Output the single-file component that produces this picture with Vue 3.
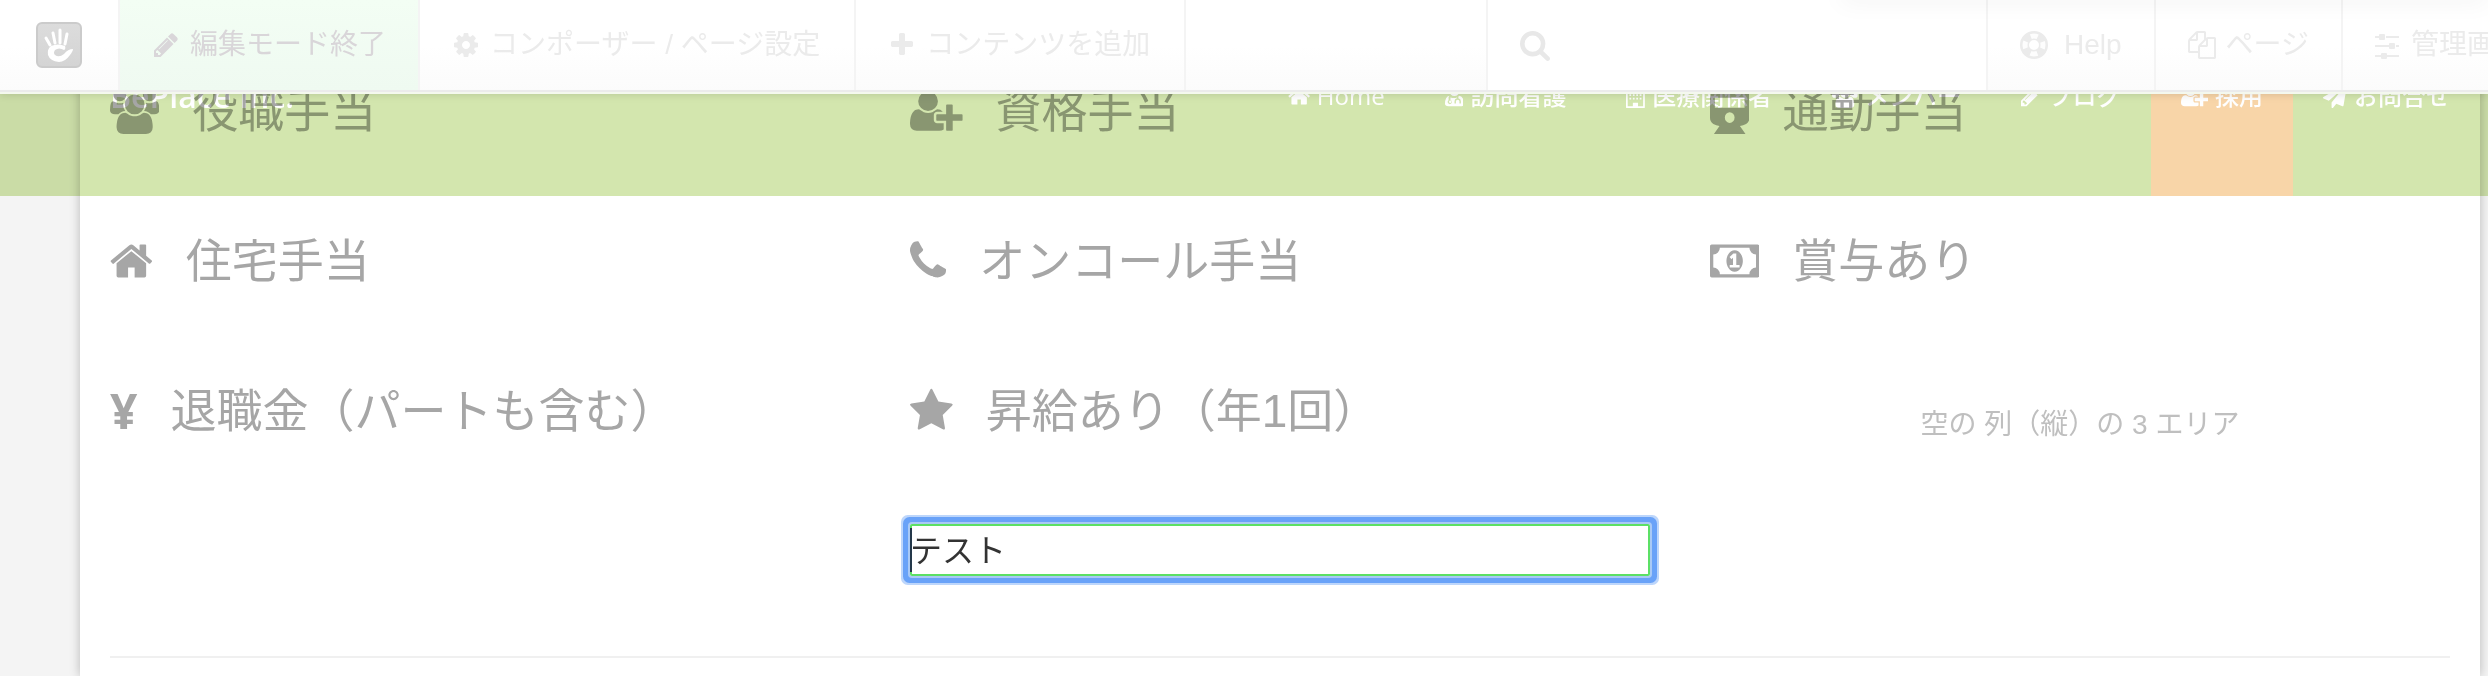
<template>
    <div class="page">
        <!-- 編集ツールバー -->
        <header class="toolbar">
            <a href="#" class="toolbar-logo" aria-label="concrete5">
                <svg viewBox="0 0 46 46">
                    <defs>
                        <linearGradient id="logo-bg" x1="0" y1="0" x2="0" y2="1">
                            <stop offset="0" stop-color="#dcdcdc" />
                            <stop offset="1" stop-color="#d4d4d4" />
                        </linearGradient>
                    </defs>
                    <rect x="1" y="1" width="44" height="44" rx="5" fill="url(#logo-bg)" stroke="#cbcbcb"
                        stroke-width="2" />
                    <g stroke="#fff" stroke-width="3" stroke-linecap="round">
                        <path d="M10 16l4 7M17 11l2 10M24 8v13M31 12l-2 10" />
                    </g>
                    <path fill="#fff"
                        d="M15 24Q22 21 29 24Q30 27 28 28Q23 25 19 28Q17 31 19 33Q23 36 28 32Q32 27 37 27Q37 29 34 33Q29 40 23 40Q14 39 12 33Q11 27 15 24z" />
                </svg>
            </a>
            <button v-for="item in editItems" :key="item.label" type="button" class="toolbar-item"
                :class="{ 'is-active': item.active }">
                <svg class="toolbar-icon" :viewBox="icons[item.icon].box">
                    <path :d="icons[item.icon].d" />
                </svg>
                <span>{{ item.label }}</span>
            </button>
            <label class="toolbar-search">
                <svg class="search-icon" :viewBox="icons.search.box">
                    <path :d="icons.search.d" />
                </svg>
                <input type="search" aria-label="検索">
            </label>
            <button type="button" class="toolbar-item is-help">
                <svg class="toolbar-icon is-wide" viewBox="0 0 28 28">
                    <circle cx="14" cy="14" r="9" fill="none" stroke="currentColor" stroke-width="8" />
                    <circle cx="14" cy="14" r="9" fill="none" stroke="#fdfdfd" stroke-width="5"
                        stroke-dasharray="7 7.14" stroke-dashoffset="3.5" />
                    <circle cx="14" cy="14" r="13" fill="none" stroke="currentColor" stroke-width="2" />
                </svg>
                <span>Help</span>
            </button>
            <button type="button" class="toolbar-item is-pages">
                <svg class="toolbar-icon is-wide" :viewBox="icons.files.box">
                    <path :d="icons.files.d" />
                </svg>
                <span>ページ</span>
            </button>
            <button type="button" class="toolbar-item is-dashboard">
                <svg class="toolbar-icon" viewBox="0 0 24 28">
                    <path
                        d="M0 5h4v2H0zM11 5h13v2H11zM0 14h14v2H0zM21 14h3v2h-3zM0 24h6v2H0zM12 24h12v2H12z" />
                    <rect x="4" y="3" width="6" height="6" rx="1" />
                    <rect x="14" y="12" width="6" height="6" rx="1" />
                    <rect x="6" y="22" width="6" height="6" rx="1" />
                </svg>
                <span>管理画面</span>
            </button>
        </header>

        <!-- サイトナビゲーション -->
        <nav class="site-nav">
            <a href="#" class="brand">BePlace Inc.</a>
            <a v-for="link in navLinks" :key="link.label" href="#" class="nav-link"
                :class="{ 'is-recruit': link.recruit }">
                <svg class="nav-icon" :viewBox="icons[link.icon].box">
                    <path :d="icons[link.icon].d" fill-rule="evenodd" />
                </svg>
                <span>{{ link.label }}</span>
            </a>
        </nav>

        <!-- 待遇一覧 -->
        <main class="sheet">
            <div class="features">
                <h4 v-for="item in features" :key="item.label" class="feature">
                    <svg v-if="item.icon" class="feature-icon" :viewBox="icons[item.icon].box">
                        <path :d="icons[item.icon].d" fill-rule="evenodd" />
                    </svg>
                    <span v-else class="feature-yen">¥</span>
                    <span>{{ item.label }}</span>
                </h4>
                <p class="empty-area">空の 列（縦）の 3 エリア</p>
            </div>
            <div class="editor-row">
                <div class="editor">
                    <input v-model="text" type="text" class="editor-input" aria-label="テキスト">
                    <span class="caret"></span>
                </div>
            </div>
            <hr class="divider">
        </main>
    </div>
</template>

<script setup>
import { ref } from 'vue'

const text = ref('テスト')

const editItems = [
    { label: '編集モード終了', icon: 'pencil', active: true },
    { label: 'コンポーザー / ページ設定', icon: 'cog' },
    { label: 'コンテンツを追加', icon: 'plus' }
]

const navLinks = [
    { label: 'Home', icon: 'home' },
    { label: '訪問看護', icon: 'userMd' },
    { label: '医療関係者', icon: 'building' },
    { label: 'メンバー', icon: 'users' },
    { label: 'ブログ', icon: 'pencil' },
    { label: '採用', icon: 'userPlus', recruit: true },
    { label: 'お問合せ', icon: 'plane' }
]

const features = [
    { label: '役職手当', icon: 'users' },
    { label: '資格手当', icon: 'userPlus' },
    { label: '通勤手当', icon: 'train' },
    { label: '住宅手当', icon: 'home' },
    { label: 'オンコール手当', icon: 'phone' },
    { label: '賞与あり', icon: 'money' },
    { label: '退職金（パートも含む）' },
    { label: '昇給あり（年1回）', icon: 'star' }
]

// アイコンのパス
const icons = {
    home: {
        box: '64 0 1664 1792',
        d: 'M1472 992v480q0 26-19 45t-45 19h-384v-384h-256v384h-384q-26 0-45-19t-19-45v-480q0-1 .5-3t.5-3l575-474 575 474q1 2 1 6zm223-69l-62 74q-8 9-21 11h-3q-13 0-21-7l-692-577-692 577q-12 8-24 7-13-2-21-11l-62-74q-8-10-7-23.5t11-21.5l719-599q32-26 76-26t76 26l244 204v-195q0-14 9-23t23-9h192q14 0 23 9t9 23v408l219 182q10 8 11 21.5t-7 23.5z'
    },
    phone: {
        box: '192 0 1408 1792',
        d: 'M1600 1240q0 27-10 70.5t-21 68.5q-21 50-122 106-94 51-186 51-27 0-53-3.5t-57.5-12.5-47-14.5-55.5-20.5-49-18q-98-35-175-83-127-79-264-216t-216-264q-48-77-83-175-3-9-18-49t-20.5-55.5-14.5-47-12.5-57.5-3.5-53q0-92 51-186 56-101 106-122 25-11 68.5-21t70.5-10q14 0 21 3 18 6 53 76 11 19 30 54t35 63.5 31 53.5q3 4 17.5 25t21.5 35.5 7 28.5q0 20-28.5 50t-62 55-62 53-28.5 46q0 9 5 22.5t8.5 20.5 14 24 11.5 19q76 137 174 235t235 174q2 1 19 11.5t24 14 20.5 8.5 22.5 5q18 0 46-28.5t53-62 55-62 50-28.5q14 0 28.5 7t35.5 21.5 25 17.5q25 15 53.5 31t63.5 35 54 30q70 35 76 53 3 7 3 21z'
    },
    star: {
        box: '64 0 1664 1792',
        d: 'M1728 647q0 22-26 48l-363 354 86 500q1 7 1 20 0 21-10.5 35.5t-30.5 14.5q-19 0-40-12l-449-236-449 236q-22 12-40 12-21 0-31.5-14.5t-10.5-35.5q0-6 2-20l86-500-364-354q-25-27-25-48 0-37 56-46l502-73 225-455q19-41 49-41t49 41l225 455 502 73q56 9 56 46z'
    },
    search: {
        box: '64 128 1664 1664',
        d: 'M1216 832q0-185-131.5-316.5t-316.5-131.5-316.5 131.5-131.5 316.5 131.5 316.5 316.5 131.5 316.5-131.5 131.5-316.5zm512 832q0 52-38 90t-90 38q-54 0-90-38l-343-342q-179 124-399 124-143 0-273.5-55.5t-225-150-150-225-55.5-273.5 55.5-273.5 150-225 225-150 273.5-55.5 273.5 55.5 225 150 150 225 55.5 273.5q0 220-124 399l343 343q37 37 37 90z'
    },
    plus: {
        box: '128 0 1536 1792',
        d: 'M1600 736v192q0 40-28 68t-68 28h-416v416q0 40-28 68t-68 28h-192q-40 0-68-28t-28-68v-416h-416q-40 0-68-28t-28-68v-192q0-40 28-68t68-28h416v-416q0-40 28-68t68-28h192q40 0 68 28t28 68v416h416q40 0 68 28t28 68z'
    },
    pencil: {
        box: '128 0 1536 1792',
        d: 'M491 1536l91-91-235-235-91 91v107h128v128h107zm523-928q0-22-22-22-10 0-17 7l-542 542q-7 7-7 17 0 22 22 22 10 0 17-7l542-542q7-7 7-17zm-54-192l416 416-832 832h-416v-416zm683 96q0 53-37 90l-166 166-416-416 166-165q36-38 90-38 53 0 91 38l235 234q37 39 37 91z'
    },
    cog: {
        box: '128 0 1536 1792',
        d: 'M1152 896q0-106-75-181t-181-75-181 75-75 181 75 181 181 75 181-75 75-181zm512-109v222q0 12-8 23t-20 13l-185 28q-19 54-39 91 35 50 107 138 10 12 10 25t-9 23q-27 37-99 108t-94 71q-12 0-26-9l-138-108q-44 23-91 38-16 136-29 186-7 28-36 28h-222q-14 0-24.5-8.5t-11.5-21.5l-28-184q-49-16-90-37l-141 107q-10 9-25 9-14 0-25-11-126-114-165-168-7-10-7-23 0-12 8-23 15-21 51-66.5t54-70.5q-27-50-41-99l-183-27q-13-2-21-12.5t-8-23.5v-222q0-12 8-23t19-13l186-28q14-46 39-92-40-57-107-138-10-12-10-24 0-10 9-23 26-36 98.5-107.5t94.5-71.5q13 0 26 10l138 107q44-23 91-38 16-136 29-186 7-28 36-28h222q14 0 24.5 8.5t11.5 21.5l28 184q49 16 90 37l142-107q9-9 24-9 13 0 25 10 129 119 165 170 7 8 7 22 0 12-8 23-15 21-51 66.5t-54 70.5q26 50 41 98l183 28q13 2 21 12.5t8 23.5z'
    },
    files: {
        box: '0 0 1792 1792',
        d: 'M1696 384q40 0 68 28t28 68v1216q0 40-28 68t-68 28h-960q-40 0-68-28t-28-68v-288h-544q-40 0-68-28t-28-68v-672q0-40 20-88t48-76l408-408q28-28 76-48t88-20h416q40 0 68 28t28 68v328q68-40 128-40h416zm-544 213l-299 299h299v-299zm-640-384l-299 299h299v-299zm196 647l316-316v-416h-384v416q0 40-28 68t-68 28h-416v640h512v-256q0-40 20-88t48-76zm956 804v-1152h-384v416q0 40-28 68t-68 28h-416v640h896z'
    },
    money: {
        box: '0 0 1920 1792',
        d: 'M768 1152h384v-96h-128v-448h-114l-148 137 77 80q42-37 55-57h2v288h-128v96zm512-256q0 70-21 142t-59.5 134-101.5 101-138 39-138-39-101.5-101-59.5-134-21-142 21-142 59.5-134 101.5-101 138-39 138 39 101.5 101 59.5 134 21 142zm512 256v-512q-106 0-181-75t-75-181h-1152q0 106-75 181t-181 75v512q106 0 181 75t75 181h1152q0-106 75-181t181-75zm128-832v1152q0 26-19 45t-45 19h-1792q-26 0-45-19t-19-45v-1152q0-26 19-45t45-19h1792q26 0 45 19t19 45z'
    },
    userPlus: {
        box: '0 0 2048 1792',
        d: 'M704 896q-159 0-271.5-112.5t-112.5-271.5 112.5-271.5 271.5-112.5 271.5 112.5 112.5 271.5-112.5 271.5-271.5 112.5zm960 128h352q13 0 22.5 9.5t9.5 22.5v192q0 13-9.5 22.5t-22.5 9.5h-352v352q0 13-9.5 22.5t-22.5 9.5h-192q-13 0-22.5-9.5t-9.5-22.5v-352h-352q-13 0-22.5-9.5t-9.5-22.5v-192q0-13 9.5-22.5t22.5-9.5h352v-352q0-13 9.5-22.5t22.5-9.5h192q13 0 22.5 9.5t9.5 22.5v352zm-736 224q0 52 38 90t90 38h256v238q-68 50-171 50h-874q-121 0-194-69t-73-190q0-53 3.5-103.5t14-109 26.5-108.5 43-97.5 62-81 85.5-53.5 111.5-20q19 0 39 17 79 61 154.5 91.5t164.5 30.5 164.5-30.5 154.5-91.5q20-17 39-17 132 0 217 96h-223q-52 0-90 38t-38 90v192z'
    },
    users: {
        box: '0 0 1920 1792',
        d: 'M593 896q-162 5-265 128h-134q-82 0-138-40.5t-56-118.5q0-353 124-353 6 0 43.5 21t97.5 42.5 119 21.5q67 0 133-23-5 37-5 66 0 139 81 256zm1071 637q0 120-73 189.5t-194 69.5h-874q-121 0-194-69.5t-73-189.5q0-53 3.5-103.5t14-109 26.5-108.5 43-97.5 62-81 85.5-53.5 111.5-20q10 0 43 21.5t73 48 107 48 135 21.5 135-21.5 107-48 73-48 43-21.5q61 0 111.5 20t85.5 53.5 62 81 43 97.5 26.5 108.5 14 109 3.5 103.5zm-1024-1277q0 106-75 181t-181 75-181-75-75-181 75-181 181-75 181 75 75 181zm704 384q0 159-112.5 271.5t-271.5 112.5-271.5-112.5-112.5-271.5 112.5-271.5 271.5-112.5 271.5 112.5 112.5 271.5zm576 225q0 78-56 118.5t-138 40.5h-134q-103-123-265-128 81-117 81-256 0-29-5-66 66 23 133 23 59 0 119-21.5t97.5-42.5 43.5-21q124 0 124 353zm-128-609q0 106-75 181t-181 75-181-75-75-181 75-181 181-75 181 75 75 181z'
    },
    train: {
        box: '0 0 1536 1792',
        d: 'M416 0h704q416 0 416 380v780q0 160-130 240-110 66-240 76l216 316H154l216-316q-130-10-240-76Q0 1320 0 1160V380Q0 0 416 0zM190 384v384h1156V384zM768 940a190 210 0 1 0 0 420a190 210 0 1 0 0-420z'
    },
    userMd: {
        box: '0 0 1408 1792',
        d: 'M704 128a384 384 0 1 1 0 768a384 384 0 1 1 0-768zM330 880q-330 70-330 600q0 184 250 184h908q250 0 250-184q0-530-330-600l-80 60v130q190 40 190 220v170h-110v-170q0-120-130-120t-130 120v170h-110v-170q0-180 180-220v-70q-190 90-480 0v190q110 40 110 150a160 160 0 1 1-250-130v-220zM390 1230a90 90 0 1 0 0 180a90 90 0 1 0 0-180z'
    },
    building: {
        box: '0 0 1408 1792',
        d: 'M64 0h1280q64 0 64 64v1664q0 64-64 64H64q-64 0-64-64V64Q0 0 64 0zM128 128v1536h384v-256h384v256h384V128zM256 256h130v130H256zM512 256h130v130H512zM768 256h130v130H768zM1024 256h130v130h-130zM256 512h130v130H256zM512 512h130v130H512zM768 512h130v130H768zM1024 512h130v130h-130zM256 768h130v130H256zM512 768h130v130H512zM768 768h130v130H768zM1024 768h130v130h-130zM256 1024h130v130H256zM512 1024h130v130H512zM768 1024h130v130H768zM1024 1024h130v130h-130z'
    },
    plane: {
        box: '0 0 1792 1792',
        d: 'M1764 11q33 24 27 64l-256 1536q-5 29-32 45-14 8-31 8-11 0-24-5l-453-185-242 295q-18 23-49 23-13 0-22-4-19-7-30.5-23.5t-11.5-36.5v-349l864-1059-1069 925-395-162q-37-14-40-55-2-40 32-59l1664-960q15-9 32-9 20 0 36 11z'
    }
}
</script>

<style>
body {
    margin: 0;
    background: #f4f4f4;
}
</style>

<style scoped>
.page {
    position: relative;
    min-height: 100vh;
    overflow: hidden;
    display: flex;
    font-family: "Liberation Sans", "Noto Sans CJK JP", sans-serif;
    --text-color: #a6a6a6;
}

.page *,
.page *::after {
    box-sizing: border-box;
}

svg {
    display: block;
    flex: none;
    fill: currentColor;
}

/* ツールバー */
.toolbar {
    position: absolute;
    top: 0;
    left: 0;
    right: 0;
    z-index: 20;
    display: flex;
    height: 94px;
    background: linear-gradient(#fff 50%, #fbfbfb);
    border-bottom: 2px solid #f4f8ee;
    box-shadow: 0 1px 8px rgba(0, 0, 0, 0.12);
}

.toolbar > * {
    border-bottom: 2px solid #ebebeb;
}

/* バーの下線は全幅に引く */
.toolbar::before {
    content: "";
    position: absolute;
    left: 0;
    right: 0;
    bottom: 0;
    height: 2px;
    background: #ebebeb;
}

.toolbar::after {
    content: "";
    position: absolute;
    top: -10px;
    right: 0;
    width: 26%;
    height: 10px;
    box-shadow: 0 0 24px rgba(0, 0, 0, 0.08);
}

.toolbar-logo {
    flex: none;
    display: flex;
    align-items: center;
    width: 120px;
    padding: 0 36px;
    border-right: 2px solid #f4f4f4;
}

.toolbar-logo svg {
    width: 46px;
    height: 46px;
}

.toolbar-item {
    flex: none;
    display: flex;
    align-items: center;
    gap: 12px;
    margin: 0;
    padding: 0 34px;
    border: 0;
    border-right: 2px solid #f4f4f4;
    border-bottom: 2px solid #ebebeb;
    background: transparent;
    color: #ebebeb;
    font-family: inherit;
    font-size: 28px;
    line-height: 40px;
    white-space: nowrap;
    cursor: pointer;
}

.toolbar-item.is-active {
    padding-right: 32px;
    background: linear-gradient(#f3fef4, #effaf1);
    color: #d9d6d9;
}

.toolbar-icon {
    width: 24px;
    height: 28px;
}

.toolbar-icon.is-wide {
    width: 28px;
}

.toolbar-search {
    display: flex;
    align-items: center;
    width: 502px;
    margin-left: auto;
    padding: 2px 32px 0;
    border-left: 2px solid #f4f4f4;
    border-right: 2px solid #f4f4f4;
    background: #fff;
    color: #e8e8e8;
}

.search-icon {
    width: 30px;
    height: 30px;
}

.toolbar-search input {
    flex: 1;
    min-width: 0;
    padding: 0 12px;
    border: 0;
    outline: none;
    background: transparent;
    font-size: 28px;
}

.toolbar-item.is-help {
    gap: 16px;
    padding: 0 32px;
}

.toolbar-item.is-pages {
    gap: 10px;
    padding: 0 32px;
}

.toolbar-item.is-dashboard {
    width: 145px;
    padding: 0 0 0 32px;
    border-right: 0;
    overflow: hidden;
}

/* ナビゲーション：本文の上に乗算で重ねる */
.site-nav {
    position: absolute;
    top: 0;
    left: 0;
    right: 0;
    z-index: 10;
    display: flex;
    height: 196px;
    padding: 0 8px 0 110px;
    background: #d3e6ae;
    mix-blend-mode: multiply;
    font-family: "Open Sans", "Noto Sans CJK JP", sans-serif;
    font-weight: 500;
}

.site-nav a {
    color: #fff;
    text-decoration: none;
}

.brand {
    display: flex;
    align-items: center;
    margin-right: auto;
    padding-bottom: 4px;
    font-size: 32px;
    font-weight: 600;
    line-height: 40px;
}

.nav-link {
    display: flex;
    align-items: center;
    gap: 7px;
    padding: 0 30px 4px;
    font-size: 24px;
    line-height: 32px;
    white-space: nowrap;
}

.nav-link.is-recruit {
    background: #f8d5a8;
}

.nav-icon {
    height: 24px;
}

/* 本文 */
.sheet {
    flex: 1;
    margin: 0 8px 0 80px;
    padding: 36px 30px 0;
    background: #fff;
    box-shadow: 0 0 10px rgba(0, 0, 0, 0.25);
    color: var(--text-color);
}

.features {
    display: grid;
    grid-template-columns: repeat(3, 1fr);
    grid-auto-rows: 150px;
    column-gap: 60px;
}

.feature {
    display: flex;
    align-items: center;
    gap: 33px;
    margin: 0;
    font-size: 46px;
    font-weight: 400;
    line-height: 64px;
    white-space: nowrap;
}

.feature-icon {
    height: 46px;
}

.feature-yen {
    font-family: "Open Sans", sans-serif;
    font-size: 48px;
    font-weight: 700;
}

.empty-area {
    align-self: center;
    margin: 0;
    padding-top: 28px;
    color: #bfbfbf;
    font-size: 28px;
    line-height: 40px;
    text-align: center;
}

.editor-row {
    display: grid;
    grid-template-columns: repeat(3, 1fr);
    column-gap: 60px;
    padding: 38px 0 80px;
}

.editor {
    grid-column: 2;
    position: relative;
}

.editor-input {
    display: block;
    width: 100%;
    height: 52px;
    padding: 0 0 4px;
    border: 0;
    border-radius: 2px;
    outline: none;
    background: #fff;
    box-shadow: inset 0 0 0 2px #5ce065, 0 0 0 2px #a9c9f6, 0 0 0 7px #69a2f8, 0 0 0 9px #bdd6fb;
    color: #333;
    font-family: inherit;
    font-size: 32px;
}

.caret {
    position: absolute;
    top: 4px;
    left: 0;
    width: 2px;
    height: 44px;
    background: #24384a;
}

.divider {
    height: 2px;
    margin: 0;
    border: 0;
    background: #f0f0f0;
}
</style>
